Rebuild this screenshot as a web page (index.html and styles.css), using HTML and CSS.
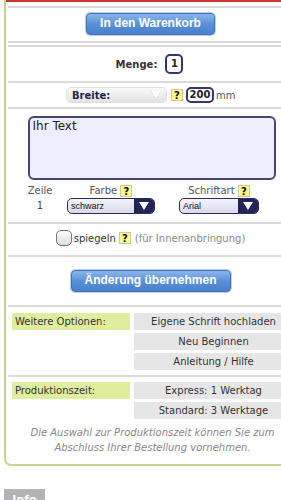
FILE: index.html
```html
<!DOCTYPE html>
<html lang="de">
<head>
    <meta charset="UTF-8">
    <meta name="viewport" content="width=device-width, initial-scale=1.0">
    <title>Schriftzug</title>
    <link rel="stylesheet" href="styles.css">
</head>
<body>
    <div class="panel">
        <div class="redbar"></div>
        <div class="sec sec-top"></div>

        <div class="sec sec-cart">
            <a href="#" class="btn btn-cart">In den Warenkorb</a>
        </div>

        <div class="sec sec-menge">
            <span class="lbl-bold">Menge:</span>
            <span class="box box-menge">1</span>
        </div>

        <div class="sec sec-breite">
            <div class="sel-gray">
                <span>Breite:</span>
                <span class="arrow-light"></span>
            </div>
            <span class="help">?</span>
            <span class="box box-size">200</span>
            <span class="unit">mm</span>
        </div>

        <div class="sec sec-text">
            <div class="textbox">Ihr Text</div>
            <div class="opts">
                <div class="col col-zeile">
                    <div class="opt-lbl">Zeile</div>
                    <div class="opt-val">1</div>
                </div>
                <div class="col col-farbe">
                    <div class="opt-lbl">Farbe <span class="help">?</span></div>
                    <div class="sel-blue"><span>schwarz</span><span class="arrow-dark"></span></div>
                </div>
                <div class="col col-font">
                    <div class="opt-lbl">Schriftart <span class="help">?</span></div>
                    <div class="sel-blue"><span>Arial</span><span class="arrow-dark"></span></div>
                </div>
            </div>
        </div>

        <div class="sec sec-mirror">
            <span class="check"></span>
            <span class="mirror-lbl">spiegeln</span>
            <span class="help">?</span>
            <span class="hint">(für Innenanbringung)</span>
        </div>

        <div class="sec sec-apply">
            <a href="#" class="btn btn-apply">Änderung übernehmen</a>
        </div>

        <div class="sec sec-more">
            <div class="row">
                <div class="row-lbl">Weitere Optionen:</div>
                <div class="cells">
                    <div class="cell">Eigene Schrift hochladen</div>
                    <div class="cell">Neu Beginnen</div>
                    <div class="cell">Anleitung / Hilfe</div>
                </div>
            </div>
        </div>

        <div class="sec sec-prod">
            <div class="row">
                <div class="row-lbl">Produktionszeit:</div>
                <div class="cells">
                    <div class="cell">Express: 1 Werktag</div>
                    <div class="cell">Standard: 3 Werktage</div>
                </div>
            </div>
            <p class="note">Die Auswahl zur Produktionszeit können Sie zum Abschluss Ihrer Bestellung vornehmen.</p>
        </div>
    </div>

    <div class="info-tab">Info</div>
</body>
</html>
```

FILE: styles.css
```css
*{
    margin: 0;
    padding: 0;
    box-sizing: border-box;
}
body{
    font-family: "DejaVu Sans", Verdana, sans-serif;
    font-size: 10px;
    color: #333;
    background-color: #fff;
    overflow: hidden;
}
.panel{
    margin-left: 4px;
    width: 300px;
    border-left: 2px solid #c6d58e;
    border-bottom: 2px solid #c6d58e;
    border-bottom-left-radius: 7px;
    padding-left: 2px;
}
.redbar{
    height: 2px;
    margin-left: -2px;
    background-color: #cc3333;
}
.sec{
    border-bottom: 2px solid #d9d9d9;
    display: flex;
    justify-content: center;
    align-items: center;
    width: 285px;
}
.sec-top{
    height: 6px;
}

/* buttons */
.btn{
    display: block;
    height: 22px;
    line-height: 18px;
    text-align: center;
    font-family: "Liberation Sans", Arial, sans-serif;
    font-weight: bold;
    font-size: 12px;
    color: #fff;
    text-decoration: none;
    border: 1px solid #3f72b8;
    border-radius: 4px;
    background: linear-gradient(#8bb6ec, #5a90d8 50%, #4a80cc);
    box-shadow: 0 0 0 1px #b9d0ee;
}
.sec-cart{
    padding: 5px 0 6px;
    margin-bottom: 2px;
}
.btn-cart{
    width: 129px;
}
.sec-apply{
    padding: 13px 0 13px;
}
.btn-apply{
    width: 160px;
}

/* menge */
.sec-menge{
    border-top: 2px solid #d9d9d9;
    padding: 7px 0 7px;
}
.lbl-bold{
    font-weight: bold;
    margin-right: 8px;
}
.box{
    display: inline-block;
    border: 2px solid #36366a;
    border-radius: 5px;
    background-color: #fff;
    font-weight: bold;
    text-align: center;
    color: #222;
}
.box-menge{
    width: 18px;
    height: 20px;
    line-height: 16px;
    margin-right: 2px;
}

/* breite */
.sec-breite{
    padding: 4px 0 4px;
    justify-content: flex-start;
    padding-left: 58px;
}
.sel-gray{
    width: 101px;
    height: 16px;
    border-radius: 5px;
    background: linear-gradient(#fafafa, #e2e2e2);
    border: 1px solid #e0e0e0;
    display: flex;
    align-items: center;
    justify-content: space-between;
    padding: 0 5px 0 5px;
    font-weight: bold;
    color: #22224a;
}
.arrow-light{
    width: 0;
    height: 0;
    border-left: 5px solid transparent;
    border-right: 5px solid transparent;
    border-top: 8px solid #fff;
    filter: drop-shadow(0 0 0.5px #999);
}
.help{
    display: inline-block;
    width: 12px;
    height: 12px;
    line-height: 11px;
    text-align: center;
    font-weight: bold;
    font-size: 10px;
    color: #111;
    background-color: #fcf98a;
    border: 1px solid #c9c9a0;
    vertical-align: middle;
}
.sec-breite .help{
    margin-left: 4px;
}
.box-size{
    width: 28px;
    height: 16px;
    line-height: 12px;
    margin-left: 3px;
}
.unit{
    color: #555;
    margin-left: 2px;
}

/* text editor */
.sec-text{
    flex-direction: column;
    padding: 7px 0 8px;
}
.textbox{
    width: 248px;
    height: 64px;
    border: 2px solid #45457a;
    border-radius: 6px;
    background-color: #eeeefc;
    font-size: 12px;
    color: #222;
    padding: 1px 3px;
    margin-left: 2px;
}
.opts{
    display: flex;
    width: 285px;
    margin-top: 4px;
    padding-left: 19px;
}
.col{
    display: flex;
    flex-direction: column;
    align-items: center;
}
.col-zeile{
    width: 26px;
    margin-right: 14px;
}
.col-farbe{
    width: 88px;
    margin-right: 24px;
}
.col-font{
    width: 80px;
}
.opt-lbl{
    color: #555;
    height: 13px;
    line-height: 13px;
    white-space: nowrap;
}
.opt-val{
    height: 16px;
    line-height: 16px;
    margin-top: 1px;
    color: #444;
}
.sel-blue{
    margin-top: 1px;
    width: 100%;
    height: 16px;
    border: 1px solid #2c2c5c;
    border-radius: 5px;
    background: linear-gradient(#f4f4fc, #d9d9ec);
    display: flex;
    justify-content: space-between;
    align-items: stretch;
    overflow: hidden;
    font-family: "Liberation Sans", Arial, sans-serif;
    font-size: 9px;
    color: #111;
}
.sel-blue span:first-child{
    line-height: 14px;
    padding-left: 3px;
}
.arrow-dark{
    width: 20px;
    background-color: #23235a;
    position: relative;
}
.arrow-dark::after{
    content: "";
    position: absolute;
    left: 5px;
    top: 3px;
    border-left: 5px solid transparent;
    border-right: 5px solid transparent;
    border-top: 8px solid #fff;
}

/* spiegeln */
.sec-mirror{
    padding: 6px 0 9px;
    font-size: 10px;
}
.check{
    display: inline-block;
    width: 16px;
    height: 16px;
    border: 1px solid #777;
    border-radius: 5px;
    background: linear-gradient(#fff, #dcdcdc);
    margin-right: 2px;
}
.mirror-lbl{
    margin-right: 3px;
}
.hint{
    color: #888;
    margin-left: 4px;
}

/* option rows */
.sec-more{
    padding: 6px 0 5px;
}
.sec-prod{
    border-bottom: none;
    flex-direction: column;
    padding: 5px 0 0;
}
.row{
    display: flex;
    width: 285px;
    padding-left: 4px;
}
.row-lbl{
    width: 118px;
    height: 17px;
    line-height: 17px;
    background-color: #e0ec9e;
    padding-left: 3px;
    margin-right: 4px;
}
.cells{
    flex: 1;
    display: flex;
    flex-direction: column;
    gap: 3px;
}
.cell{
    height: 17px;
    line-height: 17px;
    background-color: #e6e6e6;
    text-align: center;
}
.note{
    width: 285px;
    text-align: center;
    font-style: italic;
    color: #888;
    line-height: 15px;
    padding: 6px 8px 9px 12px;
}

.info-tab{
    margin: 23px 0 0 4px;
    width: 41px;
    height: 20px;
    background-color: #b3b3b3;
    color: #fff;
    font-weight: bold;
    font-size: 11px;
    text-align: center;
    line-height: 22px;
}
```
